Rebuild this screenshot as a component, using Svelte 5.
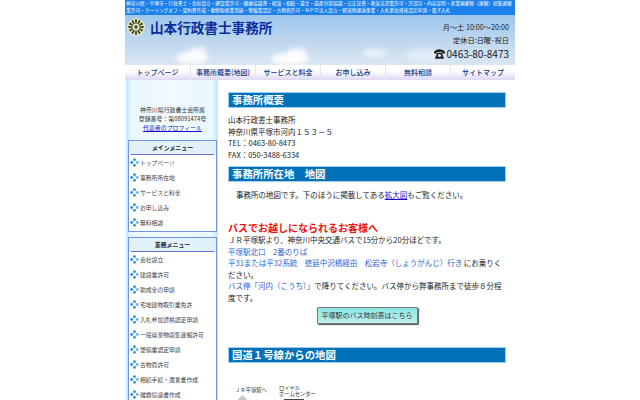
<script>
  const mainMenu = ['トップページ', '事務所所在地', 'サービスと料金', 'お申し込み', '無料相談'];
  const bizMenu = ['会社設立', '建設業許可', '助成金の申請', '宅地建物取引業免許', '入札参加資格認定申請', '一般廃棄物収集運搬許可', '警備業認定申請', '古物商許可', '相続手続・遺言書作成', '離婚協議書作成'];
  const nav = ['トップページ', '事務所概要(地図)', 'サービスと料金', 'お申し込み', '無料相談', 'サイトマップ'];
  const spokes = Array.from({ length: 12 }, (_, i) => i * 30);
</script>

<div class="page">
  <div class="topbar">神奈川県・平塚市・行政書士・会社設立・建設業許可・離婚協議書・相談・相続・遺言・遺産分割協議・公正証書・救急法営業許可・許認可・内容証明・産業廃棄物（運搬）収集運搬業許可・クーリングオフ・契約書作成・動物取扱業登録・警備業認定・古物商許可・ＮＰＯ法人設立・軽貨物運送事業・入札参加資格認定申請・電子入札</div>
  <header class="hero">
    <svg class="clouds" viewBox="0 0 390 50" width="390" height="50" aria-hidden="true">
      <defs><filter id="b"><feGaussianBlur stdDeviation="2.2" /></filter></defs>
      <g filter="url(#b)" fill="#fff">
        <ellipse cx="67" cy="43" rx="16" ry="6" opacity=".85" />
        <ellipse cx="73" cy="37" rx="9" ry="5" opacity=".7" />
        <ellipse cx="165" cy="44" rx="19" ry="6" opacity=".9" />
        <ellipse cx="172" cy="38" rx="10" ry="5" opacity=".75" />
        <ellipse cx="250" cy="38" rx="12" ry="4" opacity=".6" />
        <ellipse cx="300" cy="40" rx="20" ry="7" opacity=".35" />
      </g>
    </svg>
    <div class="brand">
      <svg class="emblem" viewBox="0 0 22 22" width="18" height="18">
        <circle cx="11" cy="11" r="10.8" fill="#f0eed8" />
        {#each spokes as a}
          <path d="M9.6 1.6h2.8l-.5 5.2h-1.8Z" fill="#3f4c1e" transform="rotate({a} 11 11)" />
        {/each}
        <circle cx="11" cy="11" r="2.2" fill="#3d4a1c" />
      </svg>
      <span class="name">山本行政書士事務所</span>
    </div>
    <div class="contact">
      <div class="hours">月～土 10:00～20:00</div>
      <div class="hours">定休日:日曜･祝日</div>
      <div class="tel">
        <svg viewBox="0 0 12 11" width="11" height="10">
          <path d="M0 3.4C2-.6 10-.6 12 3.4V5H8.8V3.3H3.2V5H0ZM3.4 4h5.2L11 10.6H1Z" fill="#222" />
          <circle cx="6" cy="7.2" r="1.7" fill="#dfe8f2" />
        </svg>
        <span>0463-80-8473</span>
      </div>
    </div>
  </header>
  <nav class="nav">
    {#each nav as item}
      <div class="navitem">{item}</div>
    {/each}
  </nav>
  <div class="body">
    <aside class="side">
      <div class="office">
        <div>神奈川県行政書士会所属</div>
        <div>登録番号：第08091474号</div>
        <div class="link">代表者のプロフィール</div>
      </div>
      <section class="menu">
        <h3>メインメニュー</h3>
        {#each mainMenu as item}
          <div class="mi">
            <svg viewBox="0 0 9 9" width="9" height="9"><circle cx="4.5" cy="1.7" r="1.4" fill="#2f8fd8"/><circle cx="1.7" cy="4.5" r="1.4" fill="#2f8fd8"/><circle cx="7.3" cy="4.5" r="1.4" fill="#62b8ee"/><circle cx="4.5" cy="7.3" r="1.4" fill="#2f8fd8"/></svg>
            <span>{item}</span>
          </div>
        {/each}
      </section>
      <section class="menu">
        <h3>業務メニュー</h3>
        {#each bizMenu as item}
          <div class="mi">
            <svg viewBox="0 0 9 9" width="9" height="9"><circle cx="4.5" cy="1.7" r="1.4" fill="#2f8fd8"/><circle cx="1.7" cy="4.5" r="1.4" fill="#2f8fd8"/><circle cx="7.3" cy="4.5" r="1.4" fill="#62b8ee"/><circle cx="4.5" cy="7.3" r="1.4" fill="#2f8fd8"/></svg>
            <span>{item}</span>
          </div>
        {/each}
      </section>
    </aside>
    <main class="main">
      <h2>事務所概要</h2>
      <div class="lines first">
        <div>山本行政書士事務所</div>
        <div>神奈川県平塚市河内１５３－５</div>
        <div>TEL：0463-80-8473</div>
        <div>FAX：050-3488-6334</div>
      </div>
      <h2>事務所所在地　地図</h2>
      <p class="intro">事務所の地図です。下のほうに掲載してある<span class="link">拡大図</span>もご覧ください。</p>
      <div class="red">バスでお越しになられるお客様へ</div>
      <div class="lines">
        <div>ＪＲ平塚駅より、神奈川中央交通バスで15分から20分ほどです。</div>
        <div class="blue">平塚駅北口　2番のりば</div>
        <div><span class="blue">平31または平32系統　徳延中沢橋経由　松岩寺（しょうがんじ）行き</span> にお乗りください。</div>
        <div><span class="blue">バス停「河内（こうち）」</span>で降りてください。バス停から弊事務所まで徒歩８分程度です。</div>
      </div>
      <div class="btnrow"><div class="btn">平塚駅のバス時刻表はこちら</div></div>
      <h2 class="third">国道１号線からの地図</h2>
      <div class="map">
        <div class="lab1">ＪＲ平塚駅へ</div>
        <div class="lab2">ロイヤル<br />ホームセンター</div>
        <div class="road"></div>
        <div class="bld"></div>
      </div>
    </main>
  </div>
</div>

<style>
  :global(body) { margin: 0; background: #fff; }
  .page {
    width: 390px; height: 400px; margin: 0 auto; overflow: hidden;
    font-family: "Noto Sans CJK JP", "Noto Sans", sans-serif; color: #222;
  }
  .topbar {
    height: 15px; background: #1c80ea; color: #fff; font-size: 4.72px; line-height: 7px;
    padding: 0 0 0 1px; box-sizing: border-box; overflow: hidden;
  }
  .hero {
    height: 50px; position: relative; display: flex; justify-content: space-between;
    background: linear-gradient(#9cc6ec, #bdd6ee 50%, #dbe7f2);
    overflow: hidden;
  }
  .clouds { position: absolute; left: 0; top: 0; }
  .brand { display: flex; align-items: center; gap: 5px; padding-left: 2px; height: 24px; position: relative; }
  .emblem { flex: none; }
  .name { font-size: 13.6px; font-weight: 700; color: #0a2d9c; line-height: 24px; white-space: nowrap; }
  .contact { position: relative; text-align: right; padding: 6px 6px 0 0; }
  .hours { font-size: 7.2px; line-height: 13px; color: #222; white-space: nowrap; }
  .tel { display: flex; align-items: center; justify-content: flex-end; gap: 2px; font-size: 10px; line-height: 14px; white-space: nowrap; }
  .nav { display: flex; height: 15px; background: linear-gradient(#fff 40%, #dcd8f4); }
  .navitem {
    width: 65px; box-sizing: border-box; text-align: center; font-size: 7px; line-height: 15px; font-weight: 500;
    color: #13337f; border-left: 1px solid #e4e4ee; white-space: nowrap;
  }
  .navitem:first-child { border-left: 0; }
  .body { display: flex; }
  .side {
    width: 92px; flex: none; margin-left: 1px; background: linear-gradient(90deg, #bfe4fa, #e9f7fe 6%, #f1faff 50%, #e9f7fe 94%, #bfe4fa);
    padding: 0 1px 0 2px; box-sizing: border-box; height: 320px;
  }
  .office {
    box-sizing: border-box; padding-top: 25px; height: 60px; text-align: center; font-size: 5.9px; line-height: 9px; color: #333; white-space: nowrap;
  }
  .link { color: #1a0dcc; text-decoration: underline; }
  .menu {
    background: linear-gradient(#e2f2fb 14px, #fff 14px); border: 1px solid #7394e2; margin-bottom: 5px; padding-bottom: 1px; box-sizing: border-box;
  }
  .menu h3 {
    margin: 0 2px; font-size: 5.9px; font-weight: 700; line-height: 13px; text-align: center;
    border-bottom: 1px solid #6a6ed0; color: #222;
  }
  .mi { display: flex; align-items: center; gap: 1px; height: 15px; font-size: 5.8px; color: #444; white-space: nowrap; padding-left: 1px; }
  .mi svg { flex: none; }
  .main { width: 278px; margin-left: 10px; padding-top: 12px; flex: none; font-size: 7.5px; line-height: 11.6px; }
  h2 {
    margin: 0; height: 16px; box-sizing: border-box; background: #0070b8; border: 1px solid #9dd0ee; color: #fff;
    font-size: 10.4px; line-height: 14px; font-weight: 700; padding-left: 3px;
  }
  .lines { color: #222; }
  .first { padding-top: 6px; margin-bottom: 6px; }
  .intro { margin: 7px 0 20px 8px; color: #222; }
  .red { color: #f01010; font-size: 10px; font-weight: 700; line-height: 13px; }
  .blue { color: #1f62d8; }
  .btnrow { display: flex; justify-content: center; margin-top: 3px; }
  .btn {
    width: 101px; height: 17px; box-sizing: border-box; background: linear-gradient(#8ce6e2, #bdf0ec);
    border: 1px solid #777; border-radius: 1px; box-shadow: 1px 1px 1px #555; text-align: center;
    font-size: 7px; line-height: 15px; color: #333; white-space: nowrap;
  }
  .third { margin-top: 23px; }
  .map { position: relative; height: 60px; font-size: 5.3px; line-height: 6px; color: #333; }
  .lab1 { position: absolute; left: 7px; top: 24px; white-space: nowrap; }
  .lab2 { position: absolute; left: 51px; top: 22px; white-space: nowrap; }
  .road { position: absolute; left: 12px; top: 33px; width: 12px; height: 22px; background: #c8c8c8; transform: rotate(-45deg); }
  .bld { position: absolute; left: 56px; top: 36px; width: 20px; height: 20px; background: #b6cf62; border: 1px solid #444; box-sizing: border-box; }
</style>
